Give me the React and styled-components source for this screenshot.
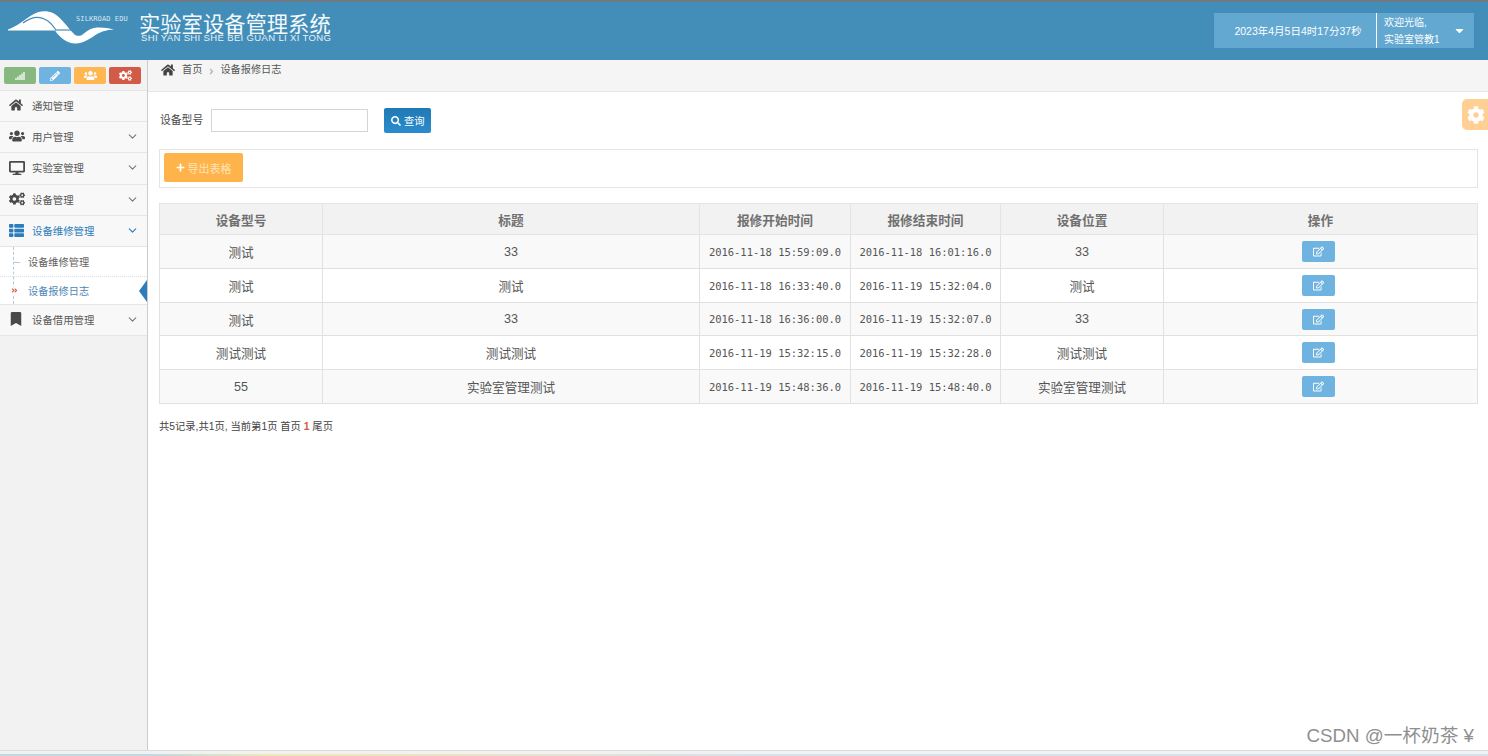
import React from "react";
import styled, { createGlobalStyle } from "styled-components";
import {
  FaHome, FaUsers, FaDesktop, FaCogs, FaThList, FaBookmark, FaPencilAlt, FaSignal,
  FaSearch, FaPlus, FaCog, FaCaretDown, FaAngleDoubleRight, FaRegEdit, FaAngleRight,
} from "react-icons/fa";
import { FiChevronDown } from "react-icons/fi";

const Global = createGlobalStyle`
  html, body { margin: 0; padding: 0; background: #fff; }
  body { font-family: "Liberation Sans", "Noto Sans CJK SC", sans-serif; color: #393939; overflow: hidden; }
  * { box-sizing: border-box; }
`;

const Page = styled.div`
  position: relative;
  width: 1488px;
  height: 756px;
  display: flex;
  flex-direction: column;
  overflow: hidden;
`;
const Header = styled.header`
  flex: 0 0 60px;
  background: #438eb9;
  border-top: 2px solid #6f7b84;
  display: flex;
  align-items: center;
  justify-content: space-between;
  padding: 0 14px 1px 8px;
`;
const Brand = styled.div`
  display: flex;
  align-items: center;
  gap: 11px;
`;
const LogoWrap = styled.div`
  position: relative;
  width: 120px;
  height: 36px;
  margin-top: -5px;
`;
const LogoTag = styled.span`
  position: absolute;
  left: 68px;
  top: 5px;
  font: 7px "DejaVu Sans Mono", monospace;
  letter-spacing: 0.1px;
  color: #d5e7f2;
  white-space: nowrap;
`;
const TitleBlock = styled.div`
  display: flex;
  flex-direction: column;
  color: #fff;
  margin-bottom: 7px;
`;
const Title = styled.div`
  font: 21.3px/24px "Noto Sans CJK SC", sans-serif;
  white-space: nowrap;
  color: #f4f9fc;
`;
const SubTitle = styled.div`
  font: 9.5px/11px "Liberation Sans", sans-serif;
  letter-spacing: 0.36px;
  margin-left: 2px;
  margin-top: -3px;
  white-space: nowrap;
  color: #e6f1f7;
`;
const UserBox = styled.div`
  display: flex;
  align-items: stretch;
  width: 260px;
  height: 35px;
  background: #62a8d1;
  color: #fff;
`;
const Clock = styled.div`
  width: 163px;
  border-right: 1px solid #fff;
  display: flex;
  align-items: center;
  justify-content: center;
  padding-left: 6px;
  font-size: 10.5px;
  white-space: nowrap;
`;
const Welcome = styled.div`
  flex: 1;
  display: flex;
  flex-direction: column;
  justify-content: center;
  padding-left: 7px;
  font-size: 10px;
  line-height: 17px;
`;
const Caret = styled.div`
  width: 28px;
  display: flex;
  align-items: center;
  font-size: 13px;
  padding-left: 7px;
`;
const Body = styled.div`
  flex: 1;
  display: flex;
  min-height: 0;
`;
const Sidebar = styled.aside`
  flex: 0 0 148px;
  background: #f2f2f2;
  border-right: 1px solid #cccccc;
`;
const Shortcuts = styled.div`
  height: 31px;
  padding: 7px 6px 0 4px;
  display: flex;
  justify-content: space-between;
  border-bottom: 1px solid #e5e5e5;
`;
const Shortcut = styled.div`
  width: 32px;
  height: 17px;
  border-radius: 2px;
  background: ${(p) => p.$c};
  color: #fff;
  font-size: ${(p) => p.$s || 10}px;
  display: flex;
  align-items: center;
  justify-content: center;
`;
const NavRow = styled.div`
  height: ${(p) => p.$h || 31}px;
  background: #f8f8f8;
  border-bottom: 1px solid #e5e5e5;
  display: flex;
  align-items: center;
  padding: 0 9px 2px;
  color: ${(p) => (p.$active ? "#2b7dbc" : "#585858")};
  font-size: 10.4px;
  white-space: nowrap;
`;
const NavIcon = styled.span`
  width: 23px;
  font-size: ${(p) => p.$s || 15}px;
  display: flex;
  align-items: center;
  color: ${(p) => (p.$active ? "#2b7dbc" : "#4a4a4a")};
`;
const NavLabel = styled.span`
  flex: 1;
`;
const Chevron = styled.span`
  display: flex;
  font-size: 13px;
  margin-right: -1px;
  color: ${(p) => (p.$active ? "#2b7dbc" : "#777")};
`;
const Sub = styled.div`
  position: relative;
  background: #fff;
  border-bottom: 1px solid #e5e5e5;
  &::before {
    content: "";
    position: absolute;
    left: 13px;
    top: 0;
    bottom: 0;
    border-left: 1px dashed #b5c9d8;
  }
`;
const SubRow = styled.div`
  position: relative;
  height: ${(p) => p.$h}px;
  display: flex;
  align-items: center;
  padding-left: 28px;
  font-size: 10.2px;
  color: ${(p) => (p.$active ? "#4b88b8" : "#616161")};
  & + & {
    border-top: 1px dotted #d8e0e6;
  }
  &::after {
    content: ${(p) => (p.$active ? '""' : "none")};
    position: absolute;
    right: 0;
    top: 3px;
    border: 11px solid transparent;
    border-left: 0;
    border-right: 8px solid #2b7dbc;
  }
`;
const Tick = styled.span`
  position: absolute;
  left: 14px;
  top: 50%;
  width: 6px;
  border-top: 1px dashed #b5c9d8;
`;
const Mark = styled.span`
  position: absolute;
  left: 11px;
  top: 50%;
  margin-top: -4px;
  display: flex;
  font-size: 7px;
  color: #d15b47;
  background: #fff;
`;
const Main = styled.main`
  flex: 1;
  min-width: 0;
`;
const Crumbs = styled.div`
  height: 32px;
  background: #f5f5f5;
  border-bottom: 1px solid #e5e5e5;
  display: flex;
  align-items: flex-start;
  padding: 3px 0 0 13px;
  font-size: 10.2px;
  line-height: 14px;
  color: #555;
`;
const CrumbHome = styled.span`
  display: flex;
  font-size: 14px;
  margin-right: 7px;
  color: #444;
`;
const CrumbSep = styled.span`
  display: flex;
  align-items: center;
  height: 14px;
  font-size: 9px;
  margin: 1px 4px 0 5px;
  color: #b2b6bf;
`;
const Content = styled.div`
  padding: 16px 10px 0 11px;
`;
const SearchRow = styled.div`
  display: flex;
  align-items: center;
  height: 25px;
  margin-bottom: 16px;
`;
const Label = styled.label`
  font-size: 10.8px;
  color: #4a4a4a;
  margin: 0 8px 3px 1px;
`;
const Input = styled.input`
  width: 157px;
  height: 23px;
  border: 1px solid #d5d5d5;
  background: #fff;
  margin: 0 16px 1px 0;
  outline: none;
`;
const SearchBtn = styled.button`
  width: 47px;
  height: 25px;
  border: 0;
  border-radius: 2px;
  background: linear-gradient(#1f79b5, #2b8ccd);
  color: #fff;
  font: 10.3px "Liberation Sans", "Noto Sans CJK SC", sans-serif;
  display: flex;
  align-items: center;
  justify-content: center;
  gap: 3px;
  padding: 0;
`;
const Toolbar = styled.div`
  height: 39px;
  border: 1px solid #e5e5e5;
  padding: 3px 4px;
  margin-bottom: 15px;
`;
const ExportBtn = styled.button`
  width: 79px;
  height: 29px;
  border: 0;
  border-radius: 2px;
  background: #ffb44b;
  color: #ffe3b8;
  font: 11px "Liberation Sans", "Noto Sans CJK SC", sans-serif;
  display: flex;
  align-items: center;
  justify-content: center;
  gap: 3px;
  padding: 0;
  & svg { color: #fff; font-size: 9px; }
`;
const Table = styled.table`
  width: 1318px;
  table-layout: fixed;
  border-collapse: collapse;
  border: 1px solid #dddddd;
`;
const Col = styled.col`
  width: ${(p) => p.$w}px;
`;
const Th = styled.th`
  height: 31px;
  background: #f2f2f2;
  border: 1px solid #e4e4e4;
  font-size: 12.7px;
  font-weight: 700;
  color: #707070;
  padding: 0;
`;
const Tr = styled.tr`
  height: ${(p) => p.$h}px;
  background: ${(p) => (p.$odd ? "#f9f9f9" : "#fff")};
`;
const Td = styled.td`
  border: 1px solid #e1e1e1;
  text-align: center;
  padding: 0;
  font-size: 12.6px;
  color: #555;
`;
const MonoTd = styled(Td)`
  font-family: "DejaVu Sans Mono", monospace;
  font-size: 10.46px;
  white-space: nowrap;
`;
const EditBtn = styled.button`
  width: 33px;
  height: 21px;
  border: 0;
  border-radius: 2px;
  background: #6fb3e0;
  color: #fff;
  font-size: 11px;
  display: inline-flex;
  align-items: center;
  justify-content: center;
  padding: 0;
  margin-right: 4px;
  vertical-align: middle;
`;
const Pager = styled.div`
  margin-top: 16px;
  font-size: 10.3px;
  line-height: 14px;
  color: #444;
  white-space: pre;
`;
const Current = styled.span`
  color: #d15b47;
  font-weight: 700;
`;
const Footer = styled.div`
  flex: 0 0 6px;
  background: #f1f1f1;
  border-top: 1px solid #dcdcdc;
  display: flex;
  align-items: flex-end;
`;
const FooterTint = styled.div`
  width: 100%;
  height: 2px;
  background: linear-gradient(90deg, #bcdbe2 0%, #bcdbe2 10%, #efe9b6 18%, #efe2c0 30%, #d7e3ec 50%, #d7e3ec 100%);
`;
const Settings = styled.div`
  position: absolute;
  right: 0;
  top: 99px;
  width: 26px;
  height: 31px;
  background: #ffcf93;
  border-radius: 5px 0 0 5px;
  color: #fff;
  font-size: 18px;
  display: flex;
  align-items: center;
  justify-content: center;
  padding-left: 2px;
`;
const Watermark = styled.div`
  position: absolute;
  right: 14px;
  top: 724px;
  font: 18.7px/24px "Liberation Sans", "Noto Sans CJK SC", sans-serif;
  color: #8f8f8f;
  white-space: nowrap;
`;

const Logo = () => (
  <svg width="120" height="36" viewBox="0 0 120 36" style={{ display: "block" }}>
    <path
      d="M0 19.5 C10 16 17 9 24 5 C30 1 38 0 45 3 C54 8 60 18 66 24 C68 26 71 26.5 74 25 C78 22 81 19 86 18 C92 17 100 18 106 19.6 C98 20 92 22 86 26 C80 30 75 33 68 33.5 C60 34 52 28 47 20.5 L0 20.5 Z"
      fill="#fff"
    />
    <path d="M15 13 C24 6 33 6 40 11 C44 14 46 17 48 20" fill="none" stroke="#438eb9" strokeWidth="1.2" />
    <path d="M47 20 L68 20" stroke="#438eb9" strokeWidth="1.2" />
  </svg>
);

const navTop = [
  { icon: <FaHome />, label: "通知管理", h: 31, s: 14 },
  { icon: <FaUsers />, label: "用户管理", h: 31, more: true, s: 16 },
  { icon: <FaDesktop />, label: "实验室管理", h: 32, more: true, s: 16 },
  { icon: <FaCogs />, label: "设备管理", h: 31, more: true, s: 16 },
  { icon: <FaThList />, label: "设备维修管理", h: 31, more: true, active: true, s: 15 },
];

const rows = [
  ["测试", "33", "2016-11-18 15:59:09.0", "2016-11-18 16:01:16.0", "33", 34],
  ["测试", "测试", "2016-11-18 16:33:40.0", "2016-11-19 15:32:04.0", "测试", 34],
  ["测试", "33", "2016-11-18 16:36:00.0", "2016-11-19 15:32:07.0", "33", 33],
  ["测试测试", "测试测试", "2016-11-19 15:32:15.0", "2016-11-19 15:32:28.0", "测试测试", 34],
  ["55", "实验室管理测试", "2016-11-19 15:48:36.0", "2016-11-19 15:48:40.0", "实验室管理测试", 34],
];

const columns = [
  ["设备型号", 163],
  ["标题", 377],
  ["报修开始时间", 151],
  ["报修结束时间", 150],
  ["设备位置", 163],
  ["操作", 314],
];

export default function App() {
  return (
    <Page>
      <Global />
      <Header>
        <Brand>
          <LogoWrap>
            <Logo />
            <LogoTag>SILKROAD EDU</LogoTag>
          </LogoWrap>
          <TitleBlock>
            <Title>实验室设备管理系统</Title>
            <SubTitle>SHI YAN SHI SHE BEI GUAN LI XI TONG</SubTitle>
          </TitleBlock>
        </Brand>
        <UserBox>
          <Clock>2023年4月5日4时17分37秒</Clock>
          <Welcome>
            <span>欢迎光临,</span>
            <span>实验室管教1</span>
          </Welcome>
          <Caret><FaCaretDown /></Caret>
        </UserBox>
      </Header>
      <Body>
        <Sidebar>
          <Shortcuts>
            <Shortcut $c="#87b87f"><FaSignal /></Shortcut>
            <Shortcut $c="#6fb3e0"><FaPencilAlt /></Shortcut>
            <Shortcut $c="#ffb752" $s={13}><FaUsers /></Shortcut>
            <Shortcut $c="#d15b47" $s={13}><FaCogs /></Shortcut>
          </Shortcuts>
          {navTop.map((n) => (
            <NavRow key={n.label} $h={n.h} $active={n.active}>
              <NavIcon $active={n.active} $s={n.s}>{n.icon}</NavIcon>
              <NavLabel>{n.label}</NavLabel>
              {n.more && <Chevron $active={n.active}><FiChevronDown /></Chevron>}
            </NavRow>
          ))}
          <Sub>
            <SubRow $h={29}><Tick />设备维修管理</SubRow>
            <SubRow $h={28} $active><Mark><FaAngleDoubleRight /></Mark>设备报修日志</SubRow>
          </Sub>
          <NavRow $h={31}>
            <NavIcon $s={14}><FaBookmark /></NavIcon>
            <NavLabel>设备借用管理</NavLabel>
            <Chevron><FiChevronDown /></Chevron>
          </NavRow>
        </Sidebar>
        <Main>
          <Crumbs>
            <CrumbHome><FaHome /></CrumbHome>
            首页
            <CrumbSep><FaAngleRight /></CrumbSep>
            设备报修日志
          </Crumbs>
          <Content>
            <SearchRow>
              <Label>设备型号</Label>
              <Input />
              <SearchBtn><FaSearch size={10} />查询</SearchBtn>
            </SearchRow>
            <Toolbar>
              <ExportBtn><FaPlus />导出表格</ExportBtn>
            </Toolbar>
            <Table>
              <colgroup>
                {columns.map(([name, w]) => <Col key={name} $w={w} />)}
              </colgroup>
              <thead>
                <tr>
                  {columns.map(([name]) => <Th key={name}>{name}</Th>)}
                </tr>
              </thead>
              <tbody>
                {rows.map((r, i) => (
                  <Tr key={i} $odd={i % 2 === 0} $h={r[5]}>
                    <Td>{r[0]}</Td>
                    <Td>{r[1]}</Td>
                    <MonoTd>{r[2]}</MonoTd>
                    <MonoTd>{r[3]}</MonoTd>
                    <Td>{r[4]}</Td>
                    <Td><EditBtn><FaRegEdit /></EditBtn></Td>
                  </Tr>
                ))}
              </tbody>
            </Table>
            <Pager>共5记录,共1页, 当前第1页 首页 <Current>1</Current> 尾页</Pager>
          </Content>
        </Main>
      </Body>
      <Footer><FooterTint /></Footer>
      <Settings><FaCog /></Settings>
      <Watermark>CSDN @一杯奶茶 ¥</Watermark>
    </Page>
  );
}
